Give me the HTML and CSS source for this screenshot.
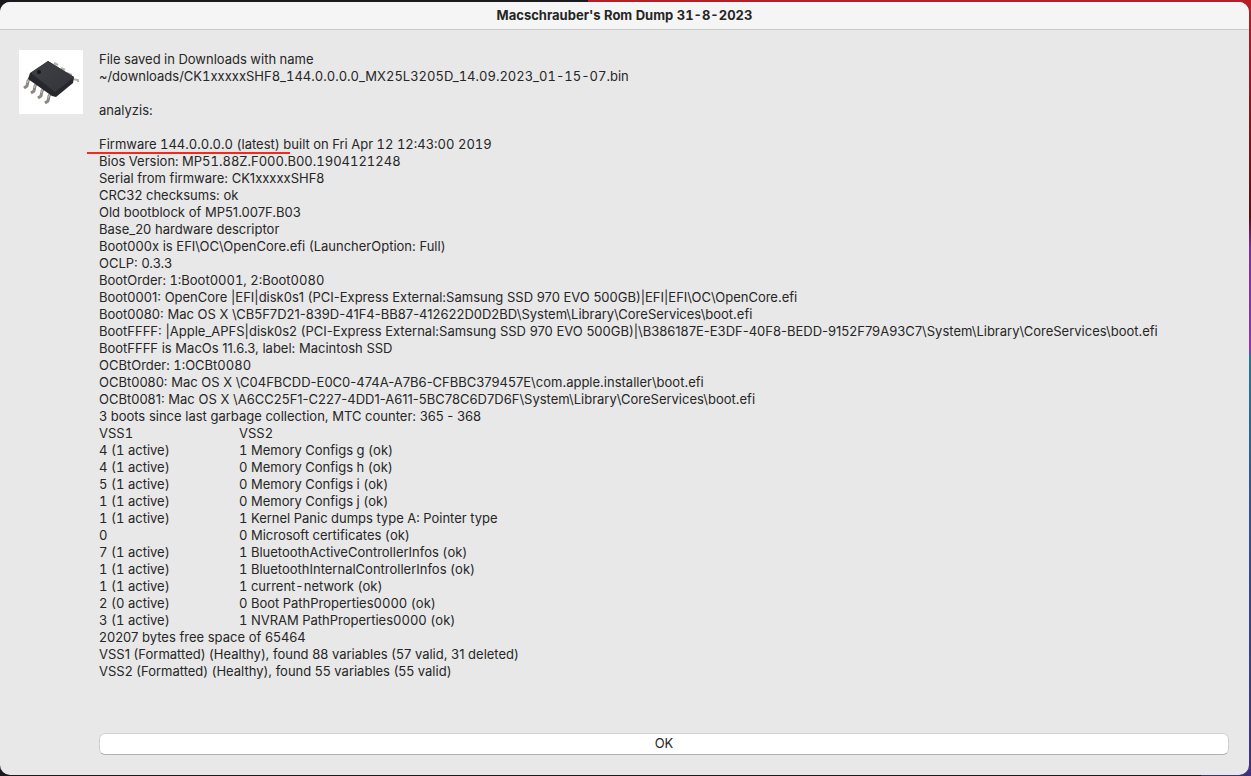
FILE: index.html
```
<!DOCTYPE html>
<html lang="en">

<head>
    <meta charset="UTF-8">
    <title>Macschrauber's Rom Dump 31-8-2023</title>
    <link rel="stylesheet" href="styles.css">
</head>

<body>
    <div class="window">
        <h1 class="titlebar">Macschrauber's Rom Dump 31-8-2023</h1>

        <div class="content">
            <svg class="chip" viewBox="0 0 64 64" aria-hidden="true">
                <defs>
                    <linearGradient id="top" x1="0" y1="0" x2="1" y2="1">
                        <stop offset="0" stop-color="#3e4045" />
                        <stop offset="1" stop-color="#33353a" />
                    </linearGradient>
                </defs>
                <rect width="64" height="64" fill="#fff" />
                <!-- pins on the far side -->
                <g fill="none" stroke="#b5b1aa" stroke-width="2">
                    <path d="M35 13l4 2M42 18l4 2M48 23l5 2M53 29l6 1v2" />
                </g>
                <!-- pins on the near side -->
                <g fill="none" stroke="#8d8881" stroke-width="3" stroke-linejoin="round">
                    <path d="M11 28l-2 3-1 5-3 2M18 33l-2 3-1 5-3 2M25 38l-2 3-1 5-3 2M32 43l-2 3-1 5-3 2" />
                </g>
                <g fill="none" stroke="#c9c6c0" stroke-width="1">
                    <path d="M10 29l-2 4M17 34l-2 4M24 39l-2 4M31 44l-2 4" />
                </g>
                <path d="M29 11L55 27L54 33L37 47L33 46L9 29L11 23Z" fill="#26282d" />
                <path d="M29 11L55 27L36 42L12 23Z" fill="url(#top)" />
                <circle cx="20" cy="22" r="2" fill="#15171a" />
            </svg>

            <div class="main">
                <div class="message">
                    <p class="tabular">File saved in Downloads with name<br>
                        ~/downloads/CK1xxxxxSHF8_144.0.0.0.0_MX25L3205D_14.09.2023_01-15-07.bin</p>
                    <p>analyzis:</p>
                    <div class="report">
                        <div class="firmware tabular">Firmware 144.0.0.0.0 (latest) built on Fri Apr 12 12:43:00 2019</div>
                        <div class="tabular">Bios Version: MP51.88Z.F000.B00.1904121248</div>
                        <div>Serial from firmware: CK1xxxxxSHF8</div>
                        <div>CRC32 checksums: ok</div>
                        <div>Old bootblock of MP51.007F.B03</div>
                        <div>Base_20 hardware descriptor</div>
                        <div>Boot000x is EFI\OC\OpenCore.efi (LauncherOption: Full)</div>
                        <div>OCLP: 0.3.3</div>
                        <div class="tabular">BootOrder: 1:Boot0001, 2:Boot0080</div>
                        <div>Boot0001: OpenCore |EFI|disk0s1 (PCI-Express External:Samsung SSD 970 EVO 500GB)|EFI|EFI\OC\OpenCore.efi</div>
                        <div>Boot0080: Mac OS X \CB5F7D21-839D-41F4-BB87-412622D0D2BD\System\Library\CoreServices\boot.efi</div>
                        <div>BootFFFF: |Apple_APFS|disk0s2 (PCI-Express External:Samsung SSD 970 EVO 500GB)|\B386187E-E3DF-40F8-BEDD-9152F79A93C7\System\Library\CoreServices\boot.efi</div>
                        <div>BootFFFF is MacOs 11.6.3, label: Macintosh SSD</div>
                        <div class="tabular">OCBtOrder: 1:OCBt0080</div>
                        <div>OCBt0080: Mac OS X \C04FBCDD-E0C0-474A-A7B6-CFBBC379457E\com.apple.installer\boot.efi</div>
                        <div>OCBt0081: Mac OS X \A6CC25F1-C227-4DD1-A611-5BC78C6D7D6F\System\Library\CoreServices\boot.efi</div>
                        <div>3 boots since last garbage collection, MTC counter: 365 - 368</div>
                        <table class="vss tabular">
                            <thead>
                                <tr><th>VSS1</th><th>VSS2</th></tr>
                            </thead>
                            <tbody>
                                <tr><td>4 (1 active)</td><td>1 Memory Configs g (ok)</td></tr>
                                <tr><td>4 (1 active)</td><td>0 Memory Configs h (ok)</td></tr>
                                <tr><td>5 (1 active)</td><td>0 Memory Configs i (ok)</td></tr>
                                <tr><td>1 (1 active)</td><td>0 Memory Configs j (ok)</td></tr>
                                <tr><td>1 (1 active)</td><td>1 Kernel Panic dumps type A: Pointer type</td></tr>
                                <tr><td>0</td><td>0 Microsoft certificates (ok)</td></tr>
                                <tr><td>7 (1 active)</td><td>1 BluetoothActiveControllerInfos (ok)</td></tr>
                                <tr><td>1 (1 active)</td><td>1 BluetoothInternalControllerInfos (ok)</td></tr>
                                <tr><td>1 (1 active)</td><td>1 current-network (ok)</td></tr>
                                <tr><td>2 (0 active)</td><td>0 Boot PathProperties0000 (ok)</td></tr>
                                <tr><td>3 (1 active)</td><td>1 NVRAM PathProperties0000 (ok)</td></tr>
                            </tbody>
                        </table>
                        <div>20207 bytes free space of 65464</div>
                        <div>VSS1 (Formatted) (Healthy), found 88 variables (57 valid, 31 deleted)</div>
                        <div>VSS2 (Formatted) (Healthy), found 55 variables (55 valid)</div>
                    </div>
                </div>
                <button class="ok" type="button">OK</button>
            </div>
        </div>
    </div>
</body>

</html>
```
FILE: styles.css
```
* {
    box-sizing: border-box;
}

body {
    margin: 0;
    padding: 2px 2px 1px 0;
    min-height: 100vh;
    display: flex;
    font-family: Inter, "Liberation Sans", sans-serif;
    font-size: 13px;
    line-height: 17px;
    color: #262626;
    /* desktop wallpaper around the window */
    background-color: #1c191e;
    background-image:
        linear-gradient(#b51d27, #b51d27),
        linear-gradient(#b51d27 0%, #5c0c18 28%, #7a2f9c 32%, #8a35b8 45%, #2a7595 46%, #35508a 66%, #41307c 100%),
        linear-gradient(#41307c, #41307c);
    background-size: 53% 12px, 12px 100%, 50px 12px;
    background-position: right top, right top, right bottom;
    background-repeat: no-repeat;
}

.window {
    flex: 1;
    min-width: 0;
    display: flex;
    flex-direction: column;
    background-color: #e8e8e8;
    border-radius: 10px;
    overflow: hidden;
}

.titlebar {
    margin: 0;
    padding: 5px 0;
    background-color: #f5f5f5;
    border-bottom: 1px solid #c8cac8;
    font-size: 13px;
    font-weight: 700;
    font-variant-numeric: tabular-nums;
    text-align: center;
}

.content {
    flex: 1;
    display: flex;
    gap: 16px;
    padding: 20px 20px 20px 19px;
}

.chip {
    flex: none;
    width: 64px;
    height: 64px;
}

.main {
    flex: 1;
    min-width: 0;
    display: flex;
    flex-direction: column;
}

.message {
    flex: 1;
    padding: 1px 0 17px;
    overflow-wrap: anywhere;
}

.message p {
    margin: 0 0 17px;
}

.tabular {
    font-variant-numeric: tabular-nums;
}

.firmware {
    position: relative;
}

/* red marker line under the version */
.firmware::after {
    content: "";
    position: absolute;
    left: -12px;
    bottom: -1px;
    width: 203px;
    height: 2px;
    background-color: #f5281e;
}

.vss {
    border-collapse: collapse;
}

.vss th,
.vss td {
    padding: 0;
    font-weight: 400;
    text-align: left;
}

.vss th:first-child {
    width: 140px;
}

.ok {
    height: 22px;
    padding: 0 0 1px;
    border: 1px solid #d2d2d2;
    border-bottom-color: #b0b0b0;
    border-radius: 6px;
    background-color: #ffffff;
    color: #262626;
    font: inherit;
}
```
